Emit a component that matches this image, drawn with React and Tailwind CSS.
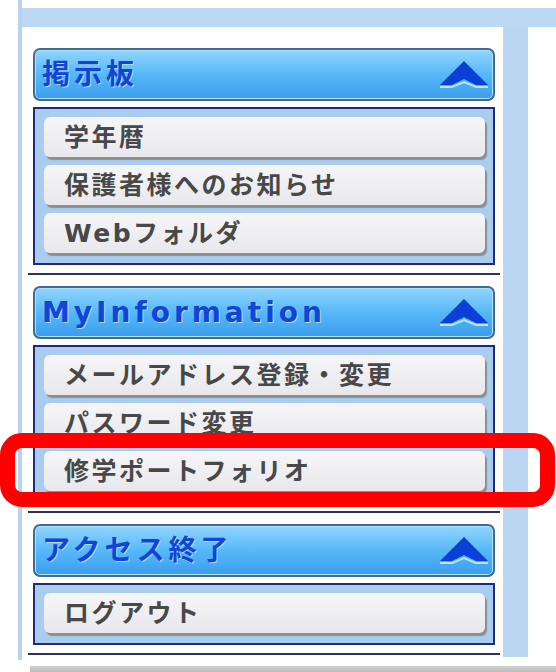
import React from "react";

const UpArrow = () => (
  <svg width="50" height="30" viewBox="0 0 50 30" className="shrink-0">
    <polyline
      points="1,27 13,27 25,22 37,27 49,27"
      fill="none"
      stroke="#b8e6ff"
      strokeWidth="2"
    />
    <polygon points="25,1 49,25 37,25 25,19 13,25 1,25" fill="#0a3fd8" />
  </svg>
);

const SectionHeader = ({ title }) => (
  <div className="mx-[5px] h-[53px] rounded-[7px] border-2 border-[#3f6c96] bg-gradient-to-b from-[#8fd5ff] via-[#56b8f8] to-[#3b9ded] shadow-[inset_0_0_0_1px_#b3e2ff] flex items-center justify-between pl-[7px] pr-[4px]">
    <span className="font-['DejaVu_Sans','Noto_Sans_CJK_JP',sans-serif] text-[28px] font-bold tracking-[4px] text-[#1244d6] [text-shadow:1px_1px_0_#a6dcff] leading-none">
      {title}
    </span>
    <UpArrow />
  </div>
);

const MenuButton = ({ label }) => (
  <div className="h-[40px] rounded-[6px] bg-gradient-to-b from-[#f6f6f8] to-[#e8e8ec] shadow-[2px_3px_1px_#8e8e8e] flex items-center pl-[20px]">
    <span className="font-['DejaVu_Sans','Noto_Sans_CJK_JP',sans-serif] text-[25px] font-bold tracking-[2.5px] text-[#484848] leading-none">
      {label}
    </span>
  </div>
);

const MenuBox = ({ items }) => (
  <div className="mx-[5px] mt-[6px] border-2 border-[#1e2b78] bg-[#a9ccef] pl-[9px] pr-[8px] pt-[8px] pb-[10px] flex flex-col gap-[8px]">
    {items.map((item) => (
      <MenuButton key={item} label={item} />
    ))}
  </div>
);

const Separator = () => <div className="mt-[8px] h-[2px] bg-[#2c3160]" />;

const sections = [
  { title: "掲示板", items: ["学年暦", "保護者様へのお知らせ", "Webフォルダ"] },
  {
    title: "MyInformation",
    items: ["メールアドレス登録・変更", "パスワード変更", "修学ポートフォリオ"],
  },
  { title: "アクセス終了", items: ["ログアウト"] },
];

export default function App() {
  return (
    <div className="relative w-[556px] h-[672px] bg-white overflow-hidden flex flex-col">
      <div className="h-[660px] flex">
        <div className="w-[18px]" />
        <div className="w-[4px] bg-[#b6d3ef]" />
        <div className="flex-1 flex flex-col">
          <div className="h-[8px] bg-white" />
          <div className="h-[19px] bg-[#bdd8f2]" />
          <div className="flex-1 flex">
            <div className="w-[481px] bg-white pl-[6px] pr-[3px] pt-[21px] flex flex-col">
              {sections.map((s, i) => (
                <div key={s.title} className={i > 0 ? "mt-[11px]" : ""}>
                  <SectionHeader title={s.title} />
                  <MenuBox items={s.items} />
                  <Separator />
                </div>
              ))}
            </div>
            <div className="w-[25px] bg-[#bbd6f0] mb-[3px]" />
            <div className="flex-1 bg-white" />
          </div>
        </div>
      </div>
      <div className="h-[6px] bg-white" />
      <div className="ml-[30px] h-[6px] bg-gradient-to-b from-[#d0d0d0] to-[#bcbcbc]" />

      {/* red highlight annotation */}
      <div className="absolute left-0 top-[433px] w-[555px] h-[74px] rounded-[22px] border-[15px] border-[#ff0000]" />
    </div>
  );
}
